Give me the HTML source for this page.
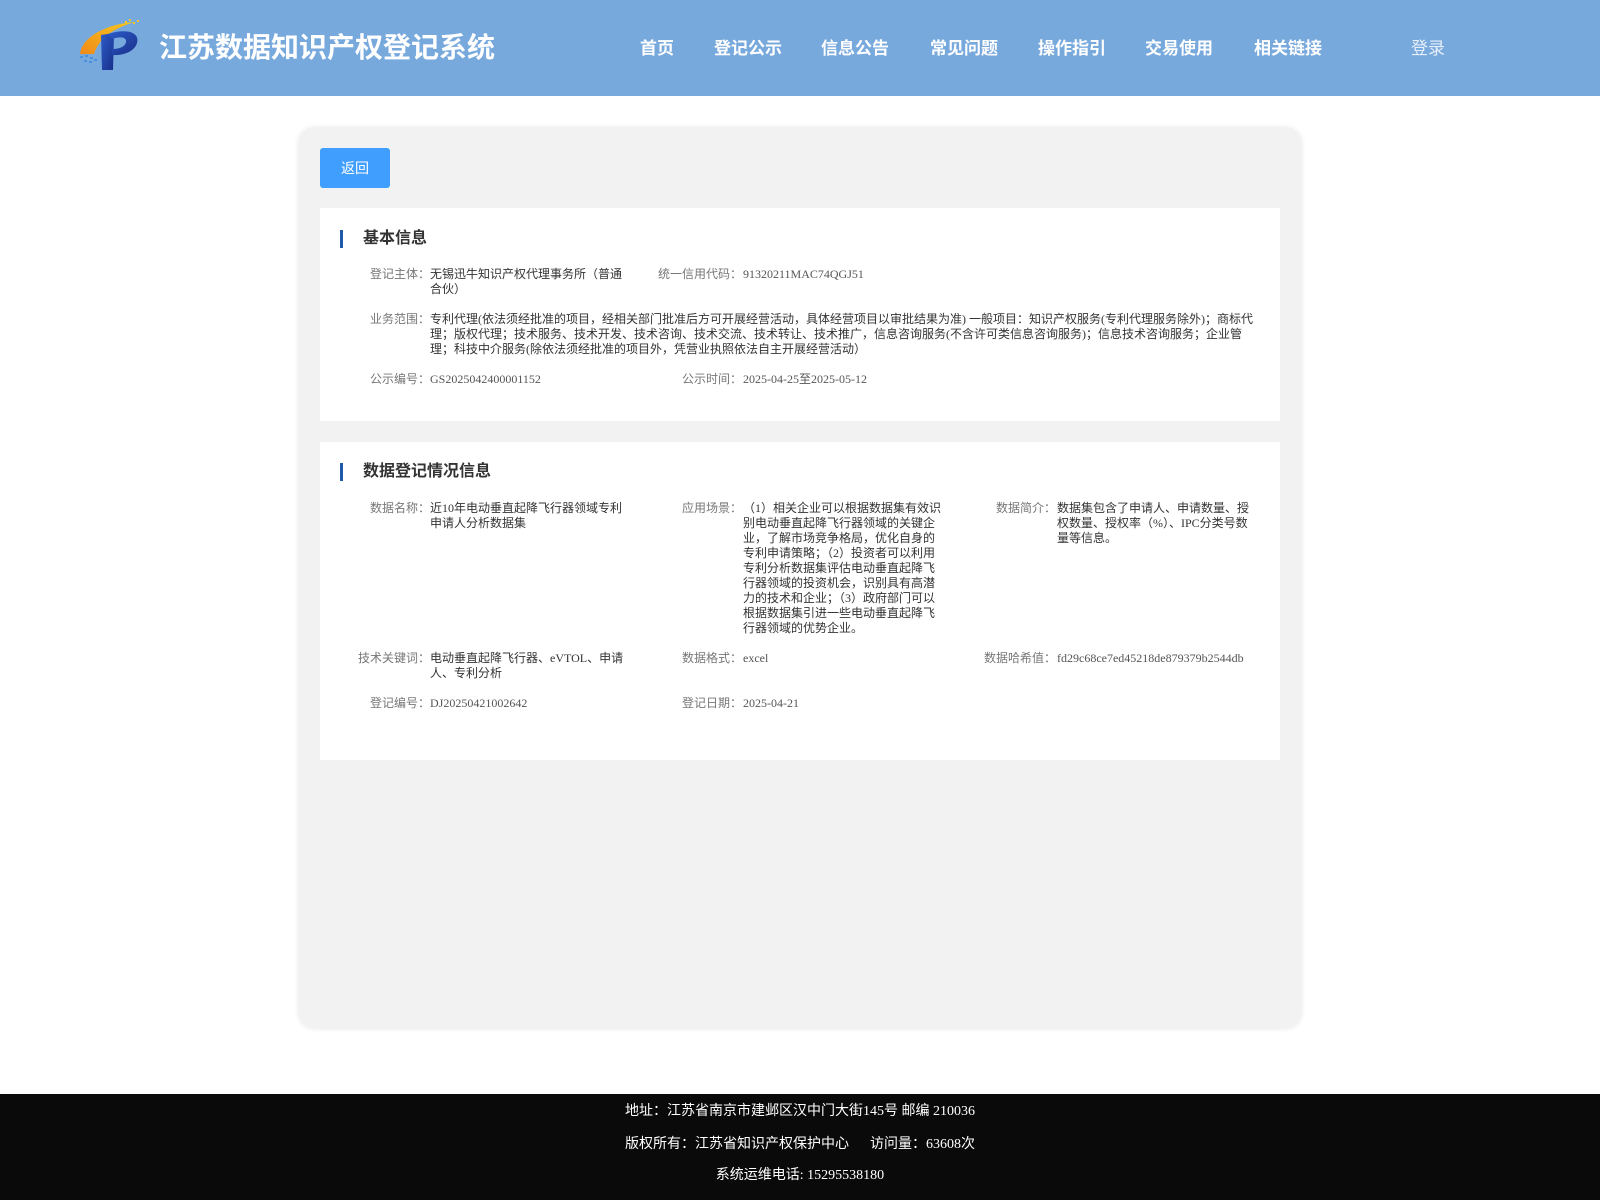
<!DOCTYPE html>
<html><head><meta charset="utf-8"><style>
*{margin:0;padding:0;box-sizing:border-box}
body{width:1600px;height:1200px;position:relative;background:#fff;font-family:"Liberation Serif","Noto Sans CJK SC",serif;overflow:hidden}
.hd{position:absolute;left:0;top:0;width:1600px;height:96px;background:#78a9dd}
.title{position:absolute;left:159px;top:26px;font:bold 28px "Liberation Sans","Noto Sans CJK SC",sans-serif;color:#fff;letter-spacing:0px}
.nav{position:absolute;top:34px;font:bold 17px "Liberation Sans","Noto Sans CJK SC",sans-serif;color:#fff}
.card{position:absolute;left:299px;top:128px;width:1002px;height:900px;background:#f2f2f2;border-radius:16px;box-shadow:0 0 6px rgba(0,0,0,.12)}
.btn{position:absolute;left:320px;top:148px;width:70px;height:40px;background:#409eff;border-radius:3px;color:#fff;font:14px "Liberation Sans","Noto Sans CJK SC",sans-serif;text-align:center;line-height:40px}
.sec{position:absolute;left:320px;width:960px;background:#fff}
.h{position:absolute;left:20px;font:bold 16px "Liberation Sans","Noto Sans CJK SC",sans-serif;color:#333;padding-left:23px;line-height:20px}
.h:before{content:"";position:absolute;left:0;top:1px;width:3px;height:18px;background:#1d5aa8}
.l{position:absolute;font-size:12px;line-height:15px;color:#777;text-align:right;width:110px}
.v{position:absolute;font-size:12px;line-height:15px;color:#333;width:196px}
.ft{position:absolute;left:0;top:1094px;width:1600px;height:106px;background:#0a0a0a;color:#fff;font:14px "Liberation Serif","Noto Sans CJK SC",serif;text-align:center}
.ft div{position:absolute;left:0;width:1600px;line-height:20px}
</style></head><body>
<div class="hd">
<svg style="position:absolute;left:70px;top:10px" width="90" height="70" viewBox="0 0 90 70">
<defs><linearGradient id="g" x1="0" y1="1" x2="1" y2="0"><stop offset="0" stop-color="#f08a1a"/><stop offset="1" stop-color="#f7c81e"/></linearGradient>
<linearGradient id="b" x1="0" y1="0" x2="1" y2="1"><stop offset="0" stop-color="#2c5cc8"/><stop offset="1" stop-color="#1a2f8a"/></linearGradient></defs>
<path d="M10 44 C12 26 38 14 64 12 C46 18 30 26 24 44 Z" fill="url(#g)"/>
<path d="M31 25 L44 23 L43 60 L32 60 Z" fill="url(#b)"/>
<path d="M38 24 C56 18 70 22 67 33 C64 43 50 46 42 45 L42 39 C49 39 55 37 56 32 C57 27 50 26 42 29 Z" fill="url(#b)"/>
<g fill="#4a90e0"><rect x="10" y="46" width="3" height="2"/><rect x="15" y="45" width="3" height="2"/><rect x="20" y="47" width="3" height="2"/><rect x="14" y="50" width="3" height="2"/><rect x="19" y="51" width="3" height="2"/><rect x="24" y="49" width="3" height="2"/></g>
<g fill="#f7c81e"><rect x="55" y="11" width="2" height="2"/><rect x="59" y="9" width="2" height="2"/><rect x="63" y="12" width="2" height="2"/><rect x="67" y="10" width="2" height="2"/></g>
</svg>
<div class="title">江苏数据知识产权登记系统</div>
<div class="nav" style="left:640px">首页</div>
<div class="nav" style="left:714px">登记公示</div>
<div class="nav" style="left:821px">信息公告</div>
<div class="nav" style="left:930px">常见问题</div>
<div class="nav" style="left:1038px">操作指引</div>
<div class="nav" style="left:1145px">交易使用</div>
<div class="nav" style="left:1254px">相关链接</div>
<div class="nav" style="left:1411px;font-weight:normal;color:#e6eef8">登录</div>
</div>
<div class="card"></div>
<div class="btn">返回</div>
<div class="sec" style="top:208px;height:213px">
<div class="h" style="top:21px">基本信息</div>
<div class="l" style="left:0;top:59px">登记主体：</div><div class="v" style="left:110px;top:59px">无锡迅牛知识产权代理事务所（普通合伙）</div>
<div class="l" style="left:312px;top:59px">统一信用代码：</div><div class="v" style="left:423px;top:59px;color:#555">91320211MAC74QGJ51</div>
<div class="l" style="left:0;top:104px">业务范围：</div><div class="v" style="left:110px;top:104px;width:828px">专利代理(依法须经批准的项目，经相关部门批准后方可开展经营活动，具体经营项目以审批结果为准) 一般项目：知识产权服务(专利代理服务除外)；商标代理；版权代理；技术服务、技术开发、技术咨询、技术交流、技术转让、技术推广，信息咨询服务(不含许可类信息咨询服务)；信息技术咨询服务；企业管理；科技中介服务(除依法须经批准的项目外，凭营业执照依法自主开展经营活动）</div>
<div class="l" style="left:0;top:164px">公示编号：</div><div class="v" style="left:110px;top:164px;color:#555">GS2025042400001152</div>
<div class="l" style="left:312px;top:164px">公示时间：</div><div class="v" style="left:423px;top:164px;color:#555">2025-04-25至2025-05-12</div>
</div>
<div class="sec" style="top:442px;height:318px">
<div class="h" style="top:20px">数据登记情况信息</div>
<div class="l" style="left:0;top:59px">数据名称：</div><div class="v" style="left:110px;top:59px">近10年电动垂直起降飞行器领域专利申请人分析数据集</div>
<div class="l" style="left:312px;top:59px">应用场景：</div><div class="v" style="left:423px;top:59px;width:200px">（1）相关企业可以根据数据集有效识别电动垂直起降飞行器领域的关键企业，了解市场竞争格局，优化自身的专利申请策略；（2）投资者可以利用专利分析数据集评估电动垂直起降飞行器领域的投资机会，识别具有高潜力的技术和企业；（3）政府部门可以根据数据集引进一些电动垂直起降飞行器领域的优势企业。</div>
<div class="l" style="left:626px;top:59px">数据简介：</div><div class="v" style="left:737px;top:59px;width:200px">数据集包含了申请人、申请数量、授权数量、授权率（%）、IPC分类号数量等信息。</div>
<div class="l" style="left:0;top:209px">技术关键词：</div><div class="v" style="left:110px;top:209px">电动垂直起降飞行器、eVTOL、申请人、专利分析</div>
<div class="l" style="left:312px;top:209px">数据格式：</div><div class="v" style="left:423px;top:209px;color:#555">excel</div>
<div class="l" style="left:626px;top:209px">数据哈希值：</div><div class="v" style="left:737px;top:209px;width:220px;color:#555">fd29c68ce7ed45218de879379b2544db</div>
<div class="l" style="left:0;top:254px">登记编号：</div><div class="v" style="left:110px;top:254px;color:#555">DJ20250421002642</div>
<div class="l" style="left:312px;top:254px">登记日期：</div><div class="v" style="left:423px;top:254px;color:#555">2025-04-21</div>
</div>
<div class="ft">
<div style="top:8px">地址：江苏省南京市建邺区汉中门大街145号 邮编 210036</div>
<div style="top:41px">版权所有：江苏省知识产权保护中心&nbsp;&nbsp;&nbsp;&nbsp;&nbsp;&nbsp;访问量：63608次</div>
<div style="top:72px">系统运维电话: 15295538180</div>
</div>
</body></html>
